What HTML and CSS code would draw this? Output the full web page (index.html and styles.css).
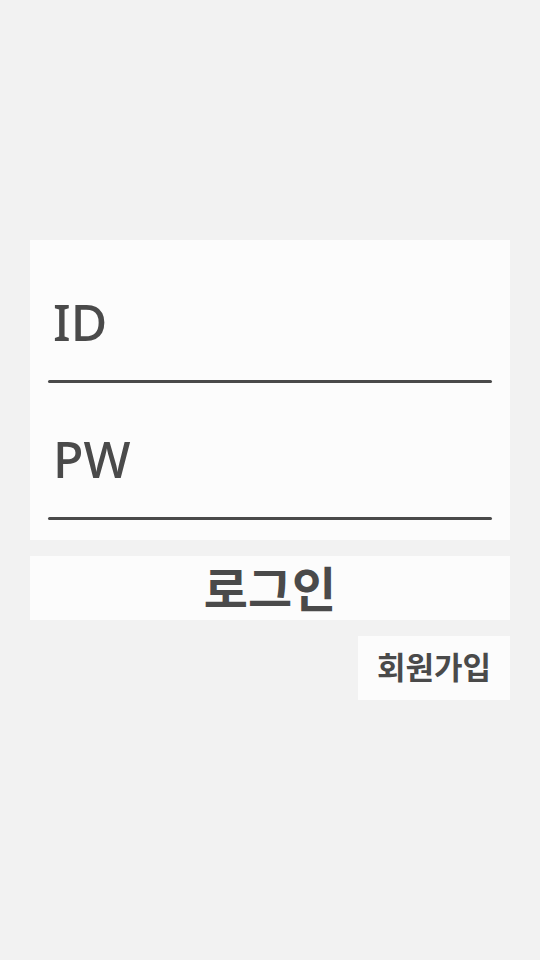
FILE: index.html
```html
<!DOCTYPE html>
<html lang="ko">
<head>
    <meta charset="UTF-8">
    <meta name="viewport" content="width=device-width, initial-scale=1.0">
    <title>로그인</title>
    <link rel="stylesheet" href="styles.css">
</head>
<body>
    <div class="page">
        <div class="login-box">
            <div class="field">
                <div class="field-label">ID</div>
                <div class="underline"></div>
            </div>
            <div class="field">
                <div class="field-label">PW</div>
                <div class="underline"></div>
            </div>
        </div>
        <button class="login-btn">로그인</button>
        <div class="join-row">
            <button class="join-btn">회원가입</button>
        </div>
    </div>
</body>
</html>
```

FILE: styles.css
```css
body {
    margin: 0;
    background-color: #f2f2f2;
    font-family: "Noto Sans", "Noto Sans CJK KR", sans-serif;
    color: #4a4a4a;
}
.page {
    padding: 240px 30px 0;
    display: flex;
    flex-direction: column;
}
.login-box {
    background-color: #fcfcfc;
    height: 300px;
    box-sizing: border-box;
    padding: 0 18px;
}
.field {
    padding-top: 52px;
}
.field + .field {
    padding-top: 46px;
}
.field-label {
    font-size: 50px;
    font-weight: 500;
    line-height: 60px;
    padding-left: 5px;
    margin-bottom: 28px;
}
.underline {
    height: 3px;
    border-radius: 2px;
    background-color: #4a4a4a;
}
button {
    font-family: "Noto Sans CJK KR", sans-serif;
    font-weight: bold;
    color: #4a4a4a;
    background-color: #fcfcfc;
    border: none;
    padding: 0 0 4px;
    cursor: pointer;
}
.login-btn {
    margin-top: 16px;
    height: 64px;
    font-size: 48px;
    line-height: 60px;
}
.join-row {
    display: flex;
    justify-content: flex-end;
    margin-top: 16px;
}
.join-btn {
    width: 152px;
    height: 64px;
    font-size: 31px;
    line-height: 60px;
}
```
